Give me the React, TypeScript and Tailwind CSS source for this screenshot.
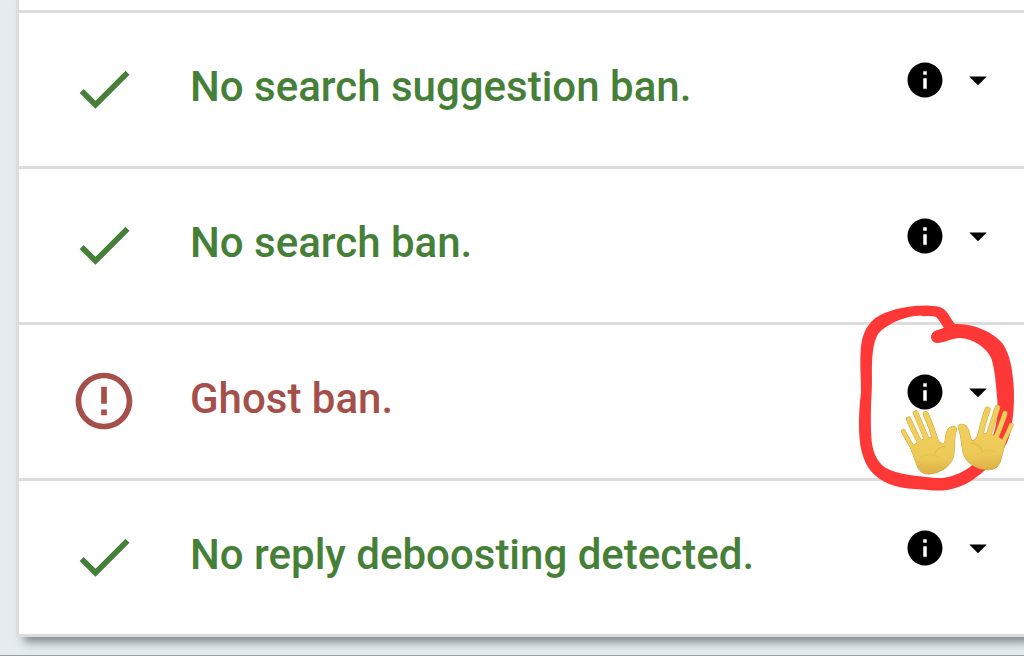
import React from 'react'

type Check = {
    id: string
    label: string
    passed: boolean
    highlighted?: boolean
}

const CHECKS: Check[] = [
    { id: 'suggestion', label: 'No search suggestion ban.', passed: true },
    { id: 'search', label: 'No search ban.', passed: true },
    { id: 'ghost', label: 'Ghost ban.', passed: false, highlighted: true },
    { id: 'reply', label: 'No reply deboosting detected.', passed: true },
]

function CheckIcon() {
    return (
        <svg viewBox="0 0 24 24" className="size-[68px] shrink-0 fill-current" aria-hidden="true">
            <path d="M9 16.17L4.83 12l-1.42 1.41L9 19 21 7l-1.41-1.41z" />
        </svg>
    )
}

function ErrorIcon() {
    return (
        <svg viewBox="0 0 24 24" className="size-[68px] shrink-0 fill-current" aria-hidden="true">
            <path d="M11 15h2v2h-2zm0-8h2v6h-2zm.99-5C6.47 2 2 6.48 2 12s4.47 10 9.99 10C17.52 22 22 17.52 22 12S17.52 2 11.99 2zM12 20c-4.42 0-8-3.58-8-8s3.58-8 8-8 8 3.58 8 8-3.58 8-8 8z" />
        </svg>
    )
}

function InfoIcon() {
    return (
        <svg viewBox="0 0 24 24" className="size-[42px] fill-current" aria-hidden="true">
            <path d="M12 2C6.48 2 2 6.48 2 12s4.48 10 10 10 10-4.48 10-10S17.52 2 12 2zm1 15h-2v-6h2v6zm0-8h-2V7h2v2z" />
        </svg>
    )
}

function CaretIcon() {
    return (
        <svg viewBox="0 0 24 24" className="size-[42px] fill-current" aria-hidden="true">
            <path d="M7 10l5 5 5-5z" />
        </svg>
    )
}

const FINGERS = [
    { d: 'M160 409 C171 430 186 455 206 488', width: 14 },
    { d: 'M176 373 C186 398 200 425 221 465', width: 16 },
    { d: 'M197 354 C208 380 220 410 240 455', width: 17 },
    { d: 'M227 357 C237 378 249 408 260 450', width: 18 },
]

const PALM =
    'M182 458 C200 440 232 424 260 426 C265 434 268 446 281 446 C288 440 285 420 291 408 C296 396 309 391 316 395 C323 402 317 412 315 424 C313 446 314 467 310 486 C302 512 276 531 246 536 C226 540 211 534 203 516 C196 500 190 480 182 458 Z'

function Hand() {
    return (
        <g strokeLinecap="round" strokeLinejoin="round">
            <path d={PALM} fill="#cfa23b" stroke="#cfa23b" strokeWidth="3" />
            {FINGERS.map((f) => (
                <g key={f.d} fill="none">
                    <path d={f.d} stroke="#cfa23b" strokeWidth={f.width} />
                    <path d={f.d} stroke="#f0cf5c" strokeWidth={f.width - 3} />
                </g>
            ))}
            <path d={PALM} fill="url(#palm)" />
            <path d="M253 482 C256 464 270 453 285 455" fill="none" stroke="#e0b64b" strokeWidth="3" />
            <path d="M213 486 C232 475 248 478 270 488" fill="none" stroke="#e5be50" strokeWidth="3" />
        </g>
    )
}

// Hand-drawn marker ring with two waving hands over the row controls
function Annotation() {
    return (
        <svg
            viewBox="0 0 522 615"
            className="pointer-events-none absolute -top-[30px] right-0 w-[174px]"
            aria-hidden="true"
        >
            <defs>
                <linearGradient id="palm" x1="0" y1="0" x2="0" y2="1">
                    <stop offset="0" stopColor="#f0cf5c" />
                    <stop offset="0.65" stopColor="#edca58" />
                    <stop offset="1" stopColor="#dcb046" />
                </linearGradient>
            </defs>
            <path
                fill="#fe3737"
                d="M258 107 C272 104 285 96 301 91 C292 80 283 68 268 64 C249 60 220 60 195 63 C154 68 108 89 84 117 C72 138 68 165 66 205 C65 235 67 258 65 292 C62 340 62 390 64 425 C66 465 78 498 106 518 C142 538 202 543 255 549 C294 552 332 536 360 516 C395 486 422 455 432 412 C442 379 444 350 442 315 C438 272 435 224 424 190 C410 158 370 132 332 129 C304 130 288 142 263 144 C238 143 237 113 258 107 Z M315 87 C369 84 429 110 459 147 C480 180 487 220 491 271 C494 330 490 370 479 420 C467 468 421 518 369 554 C329 580 289 591 236 585 C181 582 124 579 85 549 C51 525 38 489 31 451 C24 400 27 342 33 292 C34 253 29 220 32 165 C35 127 45 95 75 70 C112 44 156 38 200 32 C228 32 265 31 280 41 C298 55 303 73 315 87 Z"
            />
            <path
                fill="none"
                stroke="#fe3737"
                strokeLinecap="round"
                strokeLinejoin="round"
                strokeWidth="36"
                d="M262 125 C290 119 300 106 332 108"
            />
            <path
                fill="none"
                stroke="#fe3737"
                strokeLinecap="round"
                strokeLinejoin="round"
                strokeWidth="31"
                d="M220 48 C245 47 262 49 270 56 C282 68 290 82 300 100"
            />
            <Hand />
            <g transform="rotate(-5 415 450) translate(649 -13) scale(-1 1)">
                <Hand />
            </g>
        </svg>
    )
}

function CheckRow({ check }: { check: Check }) {
    return (
        <li
            className={`relative flex min-h-[156px] items-start border-b-[3px] border-[#dcdcdc] pt-[42px] pr-[25px] pl-[51px] ${
                check.passed ? 'text-[#457f38]' : 'text-[#a54f4b]'
            }`}
        >
            {check.passed ? <CheckIcon /> : <ErrorIcon />}
            <p className="mt-2 ml-[52px] flex-1 text-[42px] leading-[48px] font-medium">{check.label}</p>
            <div className="mt-1 flex gap-[11px] text-black">
                <button type="button" aria-label={`About: ${check.label}`}>
                    <InfoIcon />
                </button>
                <button type="button" aria-label={`Expand: ${check.label}`}>
                    <CaretIcon />
                </button>
            </div>
            {check.highlighted && <Annotation />}
        </li>
    )
}

function App() {
    return (
        <main className="overflow-hidden border-b border-[#999fa2] bg-[#e5ebee] pb-[18px] pl-4 font-['Roboto',sans-serif]">
            <section className="border-l-[3px] border-[#dcdcdc] bg-white shadow-[8px_5px_9px_#7d858a]">
                <div className="h-[13px] border-b-[3px] border-[#dcdcdc]" />
                <ul>
                    {CHECKS.map((check) => (
                        <CheckRow key={check.id} check={check} />
                    ))}
                </ul>
            </section>
        </main>
    )
}

export default App
